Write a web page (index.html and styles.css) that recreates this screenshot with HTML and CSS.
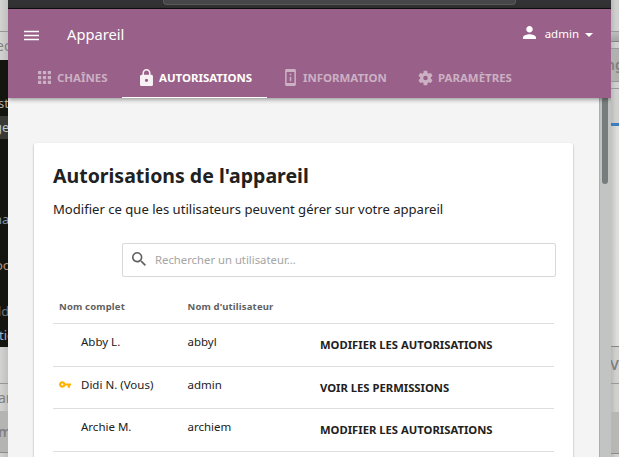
FILE: index.html
```html
<!DOCTYPE html>
<html lang="fr">
<head>
<meta charset="utf-8">
<title>Appareil</title>
<link rel="stylesheet" href="styles.css">
</head>
<body>
<div class="desktop">
  <div class="strip strip-left">
    <div class="seg l1"></div>
    <div class="seg l2"><span>ec</span></div>
    <div class="seg editor">
      <span class="code c1">st</span>
      <span class="code c2">ge</span>
      <span class="code c3">na</span>
      <span class="code c4">oo</span>
      <span class="code c5">ld</span>
      <span class="code c6">tic</span>
    </div>
    <div class="seg l4"></div>
    <div class="seg l5"><span>ar</span></div>
    <div class="seg l6"><span>m</span></div>
    <div class="seg l7"></div>
  </div>
  <div class="window">
    <div class="chrome"><div class="address"></div></div>
    <header class="appbar">
      <div class="toolbar">
        <svg class="menu" viewBox="0 0 15 11"><path d="M0 1.500h15M0 5.500h15M0 9.500h15" stroke="#fff" stroke-width="1.6"/></svg>
        <span class="brand">Appareil</span>
        <button class="user">
          <svg class="person" viewBox="4 4 16 16"><path fill="#fff" d="M12 12c2.21 0 4-1.79 4-4s-1.79-4-4-4-4 1.790-4 4 1.790 4 4 4zm0 2c-2.670 0-8 1.340-8 4v2h16v-2c0-2.660-5.330-4-8-4z"/></svg>
          <span>admin</span>
          <svg class="caret" viewBox="0 0 8 4"><path fill="#fff" d="M0 0h8L4 4z"/></svg>
        </button>
      </div>
      <nav class="tabs">
        <a class="tab t1"><svg class="i-grid" viewBox="4 4 16 16"><path d="M4 8h4V4H4v4zm6 12h4v-4h-4v4zm-6 0h4v-4H4v4zm0-6h4v-4H4v4zm6 0h4v-4h-4v4zm6-10v4h4V4h-4zm-6 4h4V4h-4v4zm6 6h4v-4h-4v4zm0 6h4v-4h-4v4z"/></svg><span>CHAÎNES</span></a>
        <a class="tab t2 active"><svg class="i-lock" viewBox="4 1 16 21"><path d="M18 8h-1V6c0-2.760-2.240-5-5-5S7 3.240 7 6v2H6c-1.100 0-2 .9-2 2v10c0 1.100.9 2 2 2h12c1.100 0 2-.9 2-2V10c0-1.100-.9-2-2-2zm-6 9c-1.100 0-2-.9-2-2s.9-2 2-2 2 .9 2 2-.9 2-2 2zm3.100-9H8.900V6c0-1.710 1.390-3.100 3.100-3.100s3.100 1.390 3.100 3.100v2z"/></svg><span>AUTORISATIONS</span></a>
        <a class="tab t3"><svg class="i-info" viewBox="5 1 14 22"><path d="M13 7h-2v2h2V7zm0 4h-2v6h2v-6zm4-9.990L7 1c-1.100 0-2 .9-2 2v18c0 1.100.9 2 2 2h10c1.100 0 2-.9 2-2V3c0-1.100-.9-1.990-2-1.990zM17 19H7V5h10v14z"/></svg><span>INFORMATION</span></a>
        <a class="tab t4"><svg class="i-gear" viewBox="2 2 20 20"><path d="M19.140 12.940c.04-.3.06-.61.06-.94 0-.32-.02-.64-.07-.94l2.030-1.580c.18-.14.23-.41.12-.61l-1.920-3.320c-.12-.22-.37-.29-.59-.22l-2.390.96c-.5-.38-1.030-.7-1.620-.94l-.36-2.540c-.04-.24-.24-.41-.48-.41h-3.840c-.24 0-.43.17-.47.41l-.36 2.540c-.59.24-1.130.57-1.620.94l-2.390-.96c-.22-.08-.47 0-.59.22L2.740 8.870c-.12.21-.08.47.12.61l2.030 1.580c-.05.3-.09.63-.09.94s.02.64.07.94l-2.030 1.580c-.18.14-.23.41-.12.61l1.920 3.320c.12.22.37.29.59.22l2.390-.96c.5.38 1.030.7 1.620.94l.36 2.540c.05.24.24.41.48.41h3.840c.24 0 .44-.17.47-.41l.36-2.540c.59-.24 1.130-.56 1.620-.94l2.390.96c.22.08.47 0 .59-.22l1.920-3.320c.12-.22.07-.47-.12-.61l-2.010-1.580zM12 15a3 3 0 1 1 0-6 3 3 0 0 1 0 6z"/></svg><span>PARAMÈTRES</span></a>
      </nav>
    </header>
    <div class="viewport">
      <main class="page">
        <section class="card">
          <h1>Autorisations de l'appareil</h1>
          <p>Modifier ce que les utilisateurs peuvent gérer sur votre appareil</p>
          <div class="search">
            <svg viewBox="3 3 17.500 17.500"><path fill="#616161" d="M15.500 14h-.79l-.28-.27C15.410 12.590 16 11.110 16 9.500 16 5.910 13.090 3 9.500 3S3 5.910 3 9.500 5.910 16 9.500 16c1.610 0 3.090-.59 4.230-1.570l.27.28v.79l5 4.990L20.490 19l-4.990-5zm-6 0C7.010 14 5 11.990 5 9.500S7.010 5 9.500 5 14 7.010 14 9.500 11.990 14 9.500 14z"/></svg>
            <span>Rechercher un utilisateur...</span>
          </div>
          <div class="table">
            <div class="row head"><span class="full">Nom complet</span><span>Nom d'utilisateur</span><span></span></div>
            <div class="row"><span class="icon"></span><span>Abby L.</span><span>abbyl</span><span class="action">MODIFIER LES AUTORISATIONS</span></div>
            <div class="row short"><span class="icon"><svg viewBox="1 6 22 12"><path fill="#ffb300" d="M12.650 10C11.830 7.670 9.610 6 7 6c-3.310 0-6 2.690-6 6s2.690 6 6 6c2.610 0 4.830-1.670 5.650-4H17v4h4v-4h2v-4H12.650zM7 14c-1.100 0-2-.9-2-2s.9-2 2-2 2 .9 2 2-.9 2-2 2z"/></svg></span><span>Didi N. (Vous)</span><span>admin</span><span class="action">VOIR LES PERMISSIONS</span></div>
            <div class="row"><span class="icon"></span><span>Archie M.</span><span>archiem</span><span class="action">MODIFIER LES AUTORISATIONS</span></div>
          </div>
        </section>
      </main>
      <div class="scrollbar"><div class="thumb"></div></div>
    </div>
  </div>
  <div class="strip strip-right">
    <div class="seg r1"></div>
    <div class="seg r2"></div>
    <div class="seg r3"></div>
    <div class="seg r4"><span>ng</span></div>
    <div class="seg r5"></div>
    <div class="seg r6"></div>
    <div class="seg r7"></div>
    <div class="seg r8"></div>
    <div class="seg r9"><span>V</span></div>
    <div class="seg r10"></div>
    <div class="seg r11"></div>
    <div class="seg r12"></div>
  </div>
</div>
</body>
</html>
```
FILE: styles.css
```css
* { box-sizing: border-box; }
body { margin: 0; overflow: hidden; font-family: "Noto Sans", sans-serif; color: #212121; }
svg { display: block; flex: none; }
.desktop { display: grid; grid-template-columns: 8px 603px 8px; width: 619px; height: 457px; overflow: hidden; }
.strip { display: flex; flex-direction: column; overflow: hidden; height: 457px; }
.seg { flex: none; overflow: hidden; white-space: nowrap; background: linear-gradient(90deg, #d3d3d1, #c0c0be); color: #80807f; font-size: 14px; }
.l1 { height: 32px; border-bottom: 1px solid #979797; }
.l2 { height: 28px; line-height: 28px; }
.l2 span { margin-left: -4px; }
.editor { height: 287px; background: #151510; display: flex; flex-direction: column; font-size: 13px; }
.code { display: block; flex: none; height: 23px; line-height: 23px; text-indent: -2px; color: #bbbbb8; }
.c1 { margin-top: 32px; color: #b5a69c; }
.c2 { margin-top: 1px; background: #393935; text-indent: -6px; color: #b9c6cc; }
.c3 { margin-top: 69px; text-indent: -6px; color: #8495a2; }
.c4 { margin-top: 23px; text-indent: -5px; color: #b39478; }
.c5 { margin-top: 23px; color: #6c777e; }
.c6 { margin-top: 1px; text-indent: -1px; color: #9fb4c0; }
.l4 { height: 37px; border-bottom: 1px solid #979797; }
.l5 { height: 27px; line-height: 28px; }
.l5 span { margin-left: -2px; }
.l6 { height: 42px; line-height: 41px; background: #b4b4b2; border-bottom: 1px solid #8d8d8d; }
.l6 span { margin-left: -2px; font-weight: 600; }
.l7 { height: 5px; }

.window { display: flex; flex-direction: column; height: 457px; overflow: hidden; background: #f4f4f4; }
.chrome { flex: none; height: 9px; background: #323234; border-bottom: 1px solid #101012; padding-left: 155px; }
.address { width: 353px; height: 5px; background: #464648; border: 1px solid #5a5a5c; border-top: 0; border-radius: 0 0 4px 4px; }
.appbar { flex: none; height: 89px; background: #996189; color: #fff; display: flex; flex-direction: column; position: relative; z-index: 1; box-shadow: 0 1px 5px #0007; }
.toolbar { height: 50px; display: flex; align-items: center; padding: 0 18px 0 16px; }
.menu { width: 15px; height: 11px; margin-top: 3px; }
.brand { margin-left: 28px; font-size: 14.700px; }
.user { margin-left: auto; display: flex; align-items: center; border: 0; padding: 0 0 1px; background: none; color: #fff; font: 11.500px "Noto Sans", sans-serif; }
.person { width: 13px; height: 13px; margin-right: 9px; margin-bottom: 3px; }
.caret { width: 8px; height: 4px; margin-left: 6px; margin-top: 2px; }
.tabs { height: 39px; display: flex; padding-left: 14px; }
.tab { display: flex; align-items: center; height: 39px; padding-bottom: 2px; flex: none; font-size: 11.450px; font-weight: 700; color: #ccb0c4; fill: #ccb0c4; }
.tab.active { color: #fff; fill: #f7f1f5; border-bottom: 1px solid #fff; padding-bottom: 1px; }
.t1 { width: 100px; padding-left: 16px; }
.t2 { width: 145px; padding-left: 18px; }
.t3 { width: 136px; padding-left: 18px; }
.t4 { padding-left: 15px; }
.i-grid { width: 13px; height: 13px; margin-right: 6px; }
.i-lock { width: 13px; height: 17px; margin-right: 6px; }
.i-info { width: 11px; height: 17px; margin-right: 7px; }
.i-gear { width: 15px; height: 16px; margin-right: 5px; }

.viewport { flex: 1; display: flex; min-height: 0; }
.page { flex: 1; padding: 45px 26px 0; overflow: hidden; }
.scrollbar { flex: none; width: 12px; background: #c1c4c2; border-left: 1px solid #aaaeac; padding-left: 2px; }
.thumb { width: 6px; height: 86px; background: #777d7c; border-radius: 0 0 3px 3px; }
.card { height: 330px; background: #fff; border-radius: 2px; box-shadow: 0 1px 2px #0006; padding: 0 18px 0 19px; }
h1 { margin: 0; padding-top: 19px; font-size: 19.500px; line-height: 28px; white-space: nowrap; }
p { margin: 0; padding-top: 10px; font-size: 13.080px; line-height: 18px; white-space: nowrap; }
.search { margin: 25px 0 0 69px; width: 434px; height: 34px; border: 1px solid #d8d8d8; border-radius: 2px; display: flex; align-items: center; padding: 0 0 2px 9px; font-size: 11.300px; color: #a5a5a5; }
.search svg { width: 14px; height: 14px; margin-right: 9px; }
.table { width: 501px; padding-top: 14px; }
.row { display: grid; grid-template-columns: 28px 106.500px 132.500px 1fr; height: 43px; padding-bottom: 7px; align-items: center; border-bottom: 1px solid #dedede; font-size: 11.500px; white-space: nowrap; }
.row.short { height: 42px; padding-bottom: 6px; }
.row.head { height: 33px; padding-bottom: 2px; font-size: 9.500px; letter-spacing: .17px; font-weight: 700; color: #616161; }
.head .full { grid-column: span 2; padding-left: 6px; }
.icon { padding-left: 6px; }
.icon svg { width: 12px; height: 7px; }
.action { font-size: 11.250px; font-weight: 700; padding-top: 6px; }

.strip-right .seg { background: linear-gradient(90deg, #bababa, #d0d0ce 5px); }
.strip-right .r1 { height: 32px; border-bottom: 1px solid #999; }
.strip-right .r2 { height: 10px; background: linear-gradient(#bdbdbd, #a5a5a5); border-bottom: 1px solid #858585; }
.strip-right .r3 { height: 7px; border-bottom: 1px solid #999; }
.strip-right .r4 { height: 33px; line-height: 32px; background: #b1b1af; border-bottom: 1px solid #969696; }
.r4 span { margin-left: -5px; font-weight: 600; }
.strip-right .r5 { height: 7px; border-bottom: 1px solid #999; }
.strip-right .r6 { height: 34px; }
.strip-right .r7 { height: 3px; background: #3e7dbd; }
.strip-right .r8 { height: 221px; background: linear-gradient(90deg, #c2c2c2, #dededd 6px); border-bottom: 1px solid #858585; }
.strip-right .r9 { height: 37px; line-height: 36px; border-bottom: 1px solid #999; }
.r9 span { margin-left: -1px; font-weight: 600; }
.strip-right .r10 { height: 28px; }
.strip-right .r11 { height: 42px; background: #b7b7b5; border-bottom: 1px solid #8d8d8d; }
.strip-right .r12 { height: 4px; }
```
